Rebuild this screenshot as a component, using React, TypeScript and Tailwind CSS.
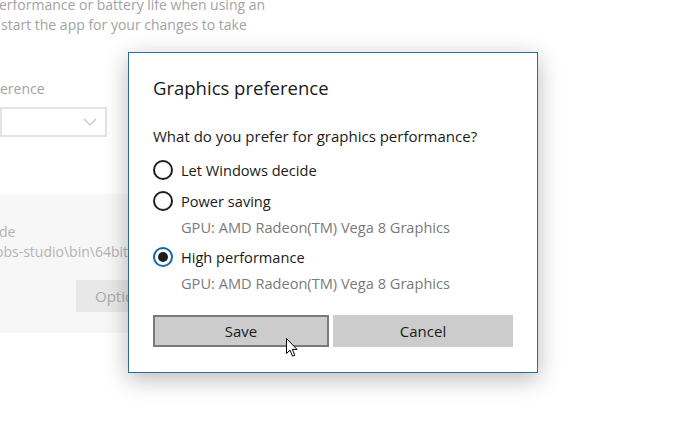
import React, { useState } from 'react';

const options = [
  { id: 'auto', label: 'Let Windows decide' },
  { id: 'saving', label: 'Power saving', gpu: 'GPU: AMD Radeon(TM) Vega 8 Graphics' },
  { id: 'high', label: 'High performance', gpu: 'GPU: AMD Radeon(TM) Vega 8 Graphics' },
];

function Radio({ checked }: { checked: boolean }) {
  return (
    <span
      className={
        checked
          ? 'flex h-[20px] w-[20px] shrink-0 items-center justify-center rounded-full border-2 border-[#1467b0]'
          : 'flex h-[20px] w-[20px] shrink-0 items-center justify-center rounded-full border-2 border-[#1f1f1f]'
      }
    >
      {checked && <span className="h-[10px] w-[10px] rounded-full bg-[#1f1f1f]" />}
    </span>
  );
}

function Cursor() {
  return (
    <svg
      className="pointer-events-none absolute left-[286px] top-[338px]"
      width="13"
      height="20"
      viewBox="0 0 13 20"
    >
      <path
        d="M0.5 0.5 L0.5 15.5 L4 12.2 L6.6 18.2 L8.8 17.2 L6.3 11.4 L11 11.4 Z"
        fill="#fff"
        stroke="#000"
        strokeWidth="1"
      />
    </svg>
  );
}

export default function App() {
  const [choice, setChoice] = useState('high');

  return (
    <div className="relative h-[430px] w-[680px] overflow-hidden bg-white font-['Open_Sans','Noto_Sans',sans-serif]">
      {/* settings page behind the dialog */}
      <div className="text-[14px] leading-[20px] text-[#a3a3a3]">
        <p className="mt-[-5px] ml-[-1px] whitespace-nowrap">erformance or battery life when using an</p>
        <p className="ml-[1px] whitespace-nowrap">start the app for your changes to take</p>
        <p className="mt-[44px] whitespace-nowrap">erence</p>
        <div className="mt-[8px] flex h-[30px] w-[107px] items-center justify-end border-2 border-[#e3e3e3] pr-[8px]">
          <svg width="14" height="8" viewBox="0 0 14 8">
            <path d="M1 1 L7 7 L13 1" fill="none" stroke="#c4c4c4" strokeWidth="1.2" />
          </svg>
        </div>
        <div className="mt-[57px] h-[139px] w-[140px] bg-[#f7f7f7] pt-[28px] text-[#b3b3b3]">
          <p className="ml-[-1px] whitespace-nowrap">de</p>
          <p className="ml-[-5px] whitespace-nowrap">obs-studio\bin\64bit</p>
          <div className="ml-[76px] mt-[18px] flex h-[32px] w-[90px] items-center bg-[#e8e8e8] pl-[19px] text-[15px] text-[#ababab]">
            Options
          </div>
        </div>
      </div>

      {/* dialog */}
      <div className="absolute left-[128px] top-[52px] flex h-[321px] w-[410px] flex-col border border-[#2f6b9c] bg-white px-[24px] pt-[21px] text-[#1a1a1a] shadow-[0_6px_22px_rgba(0,0,0,0.28)]">
        <h2 className="text-[18.5px] leading-[28px]">Graphics preference</h2>
        <p className="mt-[24px] text-[15px] leading-[20px]">What do you prefer for graphics performance?</p>

        <div className="mt-[14px] flex flex-col">
          {options.map((o, i) => (
            <div key={o.id} className={i === 0 ? '' : i === 1 ? 'mt-[11px]' : 'mt-[10px]'}>
              <button
                type="button"
                onClick={() => setChoice(o.id)}
                className="flex h-[20px] items-center gap-[8px] text-[14.6px] leading-[20px]"
              >
                <Radio checked={choice === o.id} />
                <span>{o.label}</span>
              </button>
              {o.gpu && (
                <p className="ml-[28px] mt-[6px] text-[14.6px] leading-[20px] text-[#7a7a7a]">{o.gpu}</p>
              )}
            </div>
          ))}
        </div>

        <div className="mt-[22px] flex gap-[4px]">
          <button
            type="button"
            className="h-[32px] w-[176px] border-2 border-[#7a7a7a] bg-[#cccccc] text-[15px] text-[#1a1a1a]"
          >
            Save
          </button>
          <button type="button" className="h-[32px] w-[180px] bg-[#cccccc] text-[15px] text-[#1a1a1a]">
            Cancel
          </button>
        </div>
      </div>

      <Cursor />
    </div>
  );
}
